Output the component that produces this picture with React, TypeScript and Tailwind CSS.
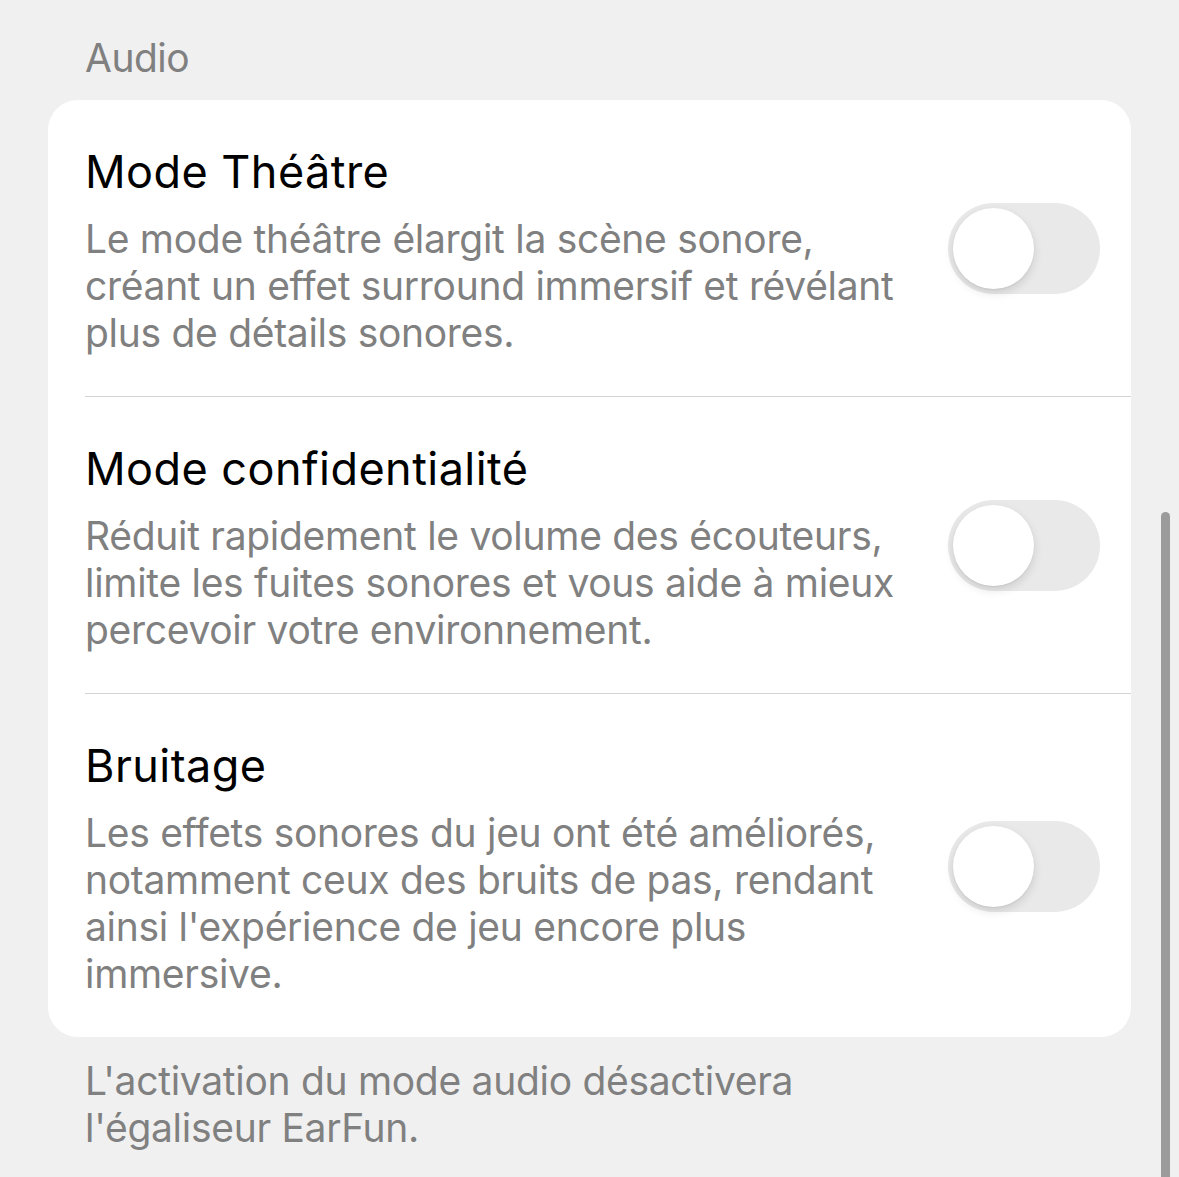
import React, { JSX, useState } from "react";

type Setting = {
  id: string;
  title: string;
  lines: string[];
};

const settings: Setting[] = [
  {
    id: "theatre",
    title: "Mode Théâtre",
    lines: [
      "Le mode théâtre élargit la scène sonore,",
      "créant un effet surround immersif et révélant",
      "plus de détails sonores.",
    ],
  },
  {
    id: "privacy",
    title: "Mode confidentialité",
    lines: [
      "Réduit rapidement le volume des écouteurs,",
      "limite les fuites sonores et vous aide à mieux",
      "percevoir votre environnement.",
    ],
  },
  {
    id: "sfx",
    title: "Bruitage",
    lines: [
      "Les effets sonores du jeu ont été améliorés,",
      "notamment ceux des bruits de pas, rendant",
      "ainsi l'expérience de jeu encore plus",
      "immersive.",
    ],
  },
];

const Toggle = ({ on, onChange }: { on: boolean; onChange: () => void }): JSX.Element => (
  <button
    onClick={onChange}
    className={`flex items-center w-[152px] h-[91px] shrink-0 rounded-full px-[5px] ${
      on ? "bg-[#34c759] justify-end" : "bg-[#e9e9ea] justify-start"
    }`}
  >
    <span className="block w-[81px] h-[81px] rounded-full bg-white shadow-[0_4px_10px_rgba(0,0,0,0.12),0_1px_2px_rgba(0,0,0,0.06)]" />
  </button>
);

export default function App(): JSX.Element {
  const [enabled, setEnabled] = useState<Record<string, boolean>>({});

  return (
    <div className="relative w-[1179px] h-[1177px] overflow-hidden bg-[#f0f0f0] [font-family:Inter,'Noto_Sans',sans-serif]">
      <div className="px-[48px] pt-[34px]">
        <div className="pl-[37px] text-[39px] leading-[47px] tracking-[-0.5px] text-[#808080]">Audio</div>

        <div className="mt-[19px] bg-white rounded-[30px] overflow-hidden">
          {settings.map((s, i) => (
            <div key={s.id} className="pl-[37px]">
              <div
                className={`flex items-center justify-between pr-[31px] pt-[45px] pb-[40px] ${
                  i < settings.length - 1 ? "border-b border-[#d4d4d6]" : ""
                }`}
              >
                <div>
                  <div className="text-[45px] leading-[54px] tracking-[0.45px] text-black">{s.title}</div>
                  <div className="mt-[16px] text-[39px] leading-[47px] tracking-[-0.3px] text-[#808080]">
                    {s.lines.map((l) => (
                      <div key={l} className="whitespace-nowrap">
                        {l}
                      </div>
                    ))}
                  </div>
                </div>
                <div className="-mt-[4px]">
                  <Toggle
                    on={!!enabled[s.id]}
                    onChange={() => setEnabled({ ...enabled, [s.id]: !enabled[s.id] })}
                  />
                </div>
              </div>
            </div>
          ))}
        </div>

        <div className="pl-[37px] pt-[20px] text-[39px] leading-[47px] tracking-[-0.3px] text-[#808080]">
          <div>L'activation du mode audio désactivera</div>
          <div>l'égaliseur EarFun.</div>
        </div>
      </div>

      {/* scroll indicator */}
      <div className="absolute left-[1161px] top-[512px] w-[9px] h-[700px] rounded-full bg-[#9b9b9b]" />
    </div>
  );
}
